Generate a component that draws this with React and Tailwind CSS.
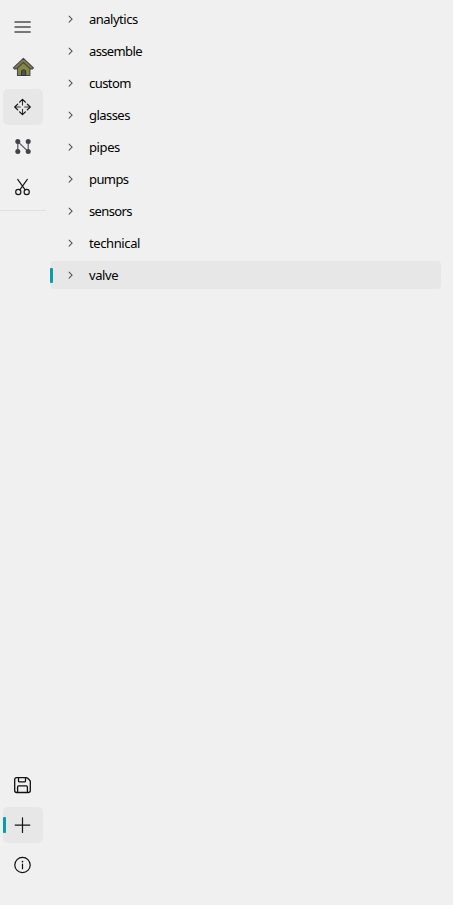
import React from 'react';

const icons = {
  menu: (
    <path d="M14.5 22h16.2M14.5 27h16.2M14.5 32h16.2" stroke="#777" strokeWidth="1.9" />
  ),
  home: (
    <g strokeLinejoin="round">
      <path d="M17.5 66v9.5h12.4V66l-6.4-5z" fill="#87873f" stroke="#484850" strokeWidth="1.1" />
      <path d="M21.5 75.5v-4.6l1-1h2.2l1 1v4.6z" fill="#505056" stroke="#2e2e36" strokeWidth=".9" />
      <path d="M13.4 67.8l10-9.4 10 9.4-1 1.1h-2l-7-6.4-7 6.4h-2z" fill="#7f7f48" stroke="#45454d" strokeWidth="1.1" />
    </g>
  ),
  move: (
    <g strokeLinecap="round" strokeLinejoin="round">
      <path d="M22.5 99.8v5.2M22.5 109.2v5.2M15.1 107h5.2M24.7 107h5.2" stroke="#333" strokeWidth="1.1" />
      <path
        d="M19.6 102.2l2.9-2.9 2.9 2.9M19.6 111.8l2.9 2.9 2.9-2.9M17.7 104.1l-2.9 2.9 2.9 2.9M27.3 104.1l2.9 2.9-2.9 2.9"
        stroke="#111" strokeWidth="1.2"
      />
    </g>
  ),
  nodes: (
    <g>
      <path d="M17.8 151.6v-10l10.4 10v-10" stroke="#55555a" strokeWidth="1.2" />
      <g fill="#434347">
        <circle cx="17.8" cy="141.6" r="2.5" />
        <circle cx="28.2" cy="141.6" r="2.5" />
        <circle cx="17.8" cy="151.6" r="2.5" />
        <circle cx="28.2" cy="151.6" r="2.5" />
      </g>
    </g>
  ),
  cut: (
    <g stroke="#151515" strokeWidth="1.15" strokeLinecap="round">
      <path d="M17.7 179.4l7.5 10.4M27.3 179.4l-7.5 10.4" />
      <circle cx="18.3" cy="192" r="2.6" />
      <circle cx="26.7" cy="192" r="2.6" />
    </g>
  ),
  save: (
    <path
      d="M16.7 777.6h9.6a2 2 0 0 1 1.4.6l2 2a2 2 0 0 1 .6 1.4v8.9a2 2 0 0 1-2 2H16.7a2 2 0 0 1-2-2v-10.9a2 2 0 0 1 2-2zM18.5 777.6v3.3a1 1 0 0 0 1 1h5a1 1 0 0 0 1-1v-3.3M17.6 792.5v-5.6a1 1 0 0 1 1-1h7.8a1 1 0 0 1 1 1v5.6"
      stroke="#111" strokeWidth="1.3" strokeLinejoin="round"
    />
  ),
  add: (
    <path d="M22.5 817.8v14.6M15.2 825.1h14.6" stroke="#151515" strokeWidth="1.2" strokeLinecap="round" />
  ),
  info: (
    <g>
      <circle cx="22.5" cy="865" r="7.7" stroke="#111" strokeWidth="1.2" />
      <path d="M22.5 864v4.7" stroke="#111" strokeWidth="1.2" strokeLinecap="round" />
      <circle cx="22.5" cy="861.6" r=".85" fill="#111" />
    </g>
  ),
};

const topItems = [
  { name: 'menu', box: '3 9 40 36' },
  { name: 'home', box: '3 49 40 36' },
  { name: 'move', box: '3 89 40 36', filled: true },
  { name: 'nodes', box: '3 129 40 36' },
  { name: 'cut', box: '3 169 40 36' },
];

const bottomItems = [
  { name: 'save', box: '3 767 40 36' },
  { name: 'add', box: '3 807 40 36', filled: true, current: true },
  { name: 'info', box: '3 847 40 36' },
];

const folders = [
  { label: 'analytics', tracking: 'tracking-[-0.5px]' },
  { label: 'assemble', tracking: 'tracking-[-0.63px]' },
  { label: 'custom', tracking: 'tracking-[-0.55px]' },
  { label: 'glasses', tracking: 'tracking-[-0.55px]' },
  { label: 'pipes', tracking: 'tracking-[-0.4px]' },
  { label: 'pumps', tracking: 'tracking-[-0.6px]' },
  { label: 'sensors', tracking: 'tracking-[-0.65px]' },
  { label: 'technical', tracking: 'tracking-[-0.4px]' },
  { label: 'valve', tracking: 'tracking-[-0.4px]', selected: true },
];

function NavButton({ name, box, filled, current }) {
  return (
    <button
      aria-label={name}
      className={`relative block h-9 w-10 rounded-[5px] ${filled ? 'bg-[#e7e7e7]' : ''}`}
    >
      {current && <span className="absolute top-[10px] left-0 h-4 w-[3px] rounded-[1px] bg-[#009faa]" />}
      <svg className="block h-9 w-10" viewBox={box} fill="none">
        {icons[name]}
      </svg>
    </button>
  );
}

function FolderRow({ label, tracking, selected }) {
  return (
    <li
      className={`relative flex h-7 items-center rounded-[4px] pl-[17px] ${selected ? 'bg-[#e7e7e7]' : ''}`}
    >
      {selected && <span className="absolute top-[7px] left-0 h-[15px] w-[3px] rounded-[1px] bg-[#009faa]" />}
      <svg className="h-2 w-2" viewBox="0 0 8 8" fill="none">
        <path d="M2.1 1.2l3 3-3 3" stroke="#555" strokeWidth="1.1" strokeLinecap="round" strokeLinejoin="round" />
      </svg>
      <span className={`ml-[14px] text-[13px] leading-7 ${tracking}`}>{label}</span>
    </li>
  );
}

export default function App() {
  return (
    <div className="flex h-[905px] w-[453px] bg-[#f0f0f0] font-['Noto_Sans','Open_Sans',sans-serif] text-black">
      <nav className="flex w-[46px] flex-col justify-between pt-[9px] pb-[22px]">
        <div>
          <div className="flex flex-col gap-1 pl-[3px]">
            {topItems.map((item) => (
              <NavButton key={item.name} {...item} />
            ))}
          </div>
          <div className="mt-[5px] h-px bg-[#e0e0e0]" />
        </div>
        <div className="flex flex-col gap-1 pl-[3px]">
          {bottomItems.map((item) => (
            <NavButton key={item.name} {...item} />
          ))}
        </div>
      </nav>
      <ul className="ml-1 flex w-[391px] flex-col gap-1 pt-[5px]">
        {folders.map((folder) => (
          <FolderRow key={folder.label} {...folder} />
        ))}
      </ul>
    </div>
  );
}
